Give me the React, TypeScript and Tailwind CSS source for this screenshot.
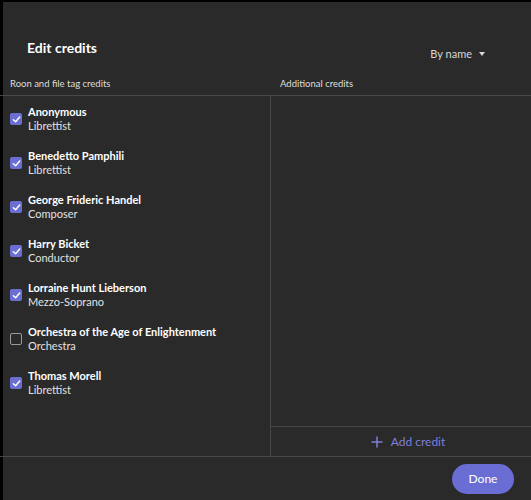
import React from 'react';

const credits = [
    { name: 'Anonymous', role: 'Librettist', checked: true },
    { name: 'Benedetto Pamphili', role: 'Librettist', checked: true },
    { name: 'George Frideric Handel', role: 'Composer', checked: true },
    { name: 'Harry Bicket', role: 'Conductor', checked: true },
    { name: 'Lorraine Hunt Lieberson', role: 'Mezzo-Soprano', checked: true },
    { name: 'Orchestra of the Age of Enlightenment', role: 'Orchestra', checked: false },
    { name: 'Thomas Morell', role: 'Librettist', checked: true },
];

const Check: React.FC<{ checked: boolean }> = ({ checked }) =>
    checked ? (
        <span className="w-[12px] h-[12px] rounded-[2px] bg-[#6c6fd2] flex items-center justify-center shrink-0">
            <svg width="9" height="9" viewBox="0 0 10 10" fill="none">
                <path d="M1.5 5.2 L4 7.6 L8.6 2.2" stroke="white" strokeWidth="1.6" strokeLinecap="round" strokeLinejoin="round" />
            </svg>
        </span>
    ) : (
        <span className="w-[12px] h-[12px] rounded-[2px] border border-[#9a9a9a] shrink-0" />
    );

const App: React.FC = () => {
    return (
        <div className="w-[531px] h-[500px] bg-black pl-[3px] pt-[2px] font-['Lato','Noto_Sans',sans-serif]">
            <div className="h-full bg-[#2a2a2a] flex flex-col text-white">

                {/* Header */}
                <div className="h-[72px] flex justify-between pl-[24px] pr-[46px]">
                    <h1 className="pt-[36px] text-[14px] leading-[20px] font-bold">Edit credits</h1>
                    <button className="pt-[44px] h-fit flex items-center gap-[7px] text-[11px] leading-[16px] text-[#d8d8d8]">
                        By name
                        <svg width="6" height="4" viewBox="0 0 6 4"><path d="M0 0 H6 L3 4 Z" fill="#d8d8d8" /></svg>
                    </button>
                </div>

                {/* Column titles */}
                <div className="h-[22px] -ml-[3px] flex items-center border-b border-[#474747] text-[9.5px] text-[#dedede]">
                    <div className="w-[271px] pl-[10px]">Roon and file tag credits</div>
                    <div className="pl-[9px]">Additional credits</div>
                </div>

                {/* Body */}
                <div className="flex-1 flex">
                    <div className="w-[268px] border-r border-[#474747] pt-[9px] pl-[7px] flex flex-col gap-[16px]">
                        {credits.map((c) => (
                            <div key={c.name} className="flex items-center gap-[6px] h-[28px]">
                                <Check checked={c.checked} />
                                <div className="flex flex-col text-[11px] leading-[14px]">
                                    <span className="font-bold text-white">{c.name}</span>
                                    <span className="text-[#e2e2e2]">{c.role}</span>
                                </div>
                            </div>
                        ))}
                    </div>
                    <div className="flex-1 flex flex-col">
                        <div className="flex-1" />
                        <button className="h-[30px] border-t border-[#474747] pl-[14px] flex items-center justify-center gap-[8px] text-[12px] text-[#7d80dc]">
                            <svg width="12" height="12" viewBox="0 0 12 12"><path d="M6 0.5 V11.5 M0.5 6 H11.5" stroke="#7d80dc" strokeWidth="1.5" /></svg>
                            Add credit
                        </button>
                    </div>
                </div>

                {/* Footer */}
                <div className="h-[44px] -ml-[3px] border-t border-[#474747] flex items-center justify-end pr-[17px]">
                    <button className="w-[62px] h-[30px] rounded-full bg-[#6a6ed4] text-[12px] text-white">Done</button>
                </div>
            </div>
        </div>
    );
};

export default App;
